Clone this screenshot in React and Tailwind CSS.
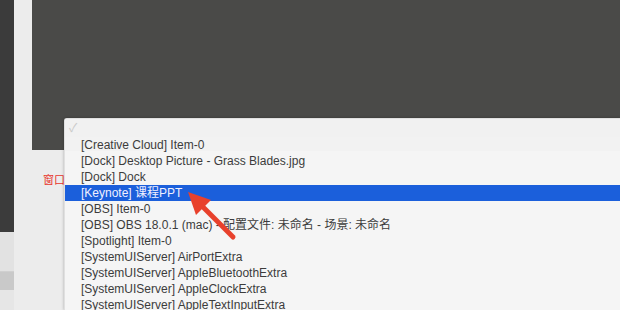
const items = [
  '[Creative Cloud] Item-0',
  '[Dock] Desktop Picture - Grass Blades.jpg',
  '[Dock] Dock',
  '[Keynote] 课程PPT',
  '[OBS] Item-0',
  '[OBS] OBS 18.0.1 (mac) - 配置文件: 未命名 - 场景: 未命名',
  '[Spotlight] Item-0',
  '[SystemUIServer] AirPortExtra',
  '[SystemUIServer] AppleBluetoothExtra',
  '[SystemUIServer] AppleClockExtra',
  '[SystemUIServer] AppleTextInputExtra',
];

function Arrow() {
  return (
    <svg className="absolute left-0 top-0" width="620" height="310" viewBox="0 0 620 310">
      <line x1="233" y1="237" x2="200" y2="204" stroke="#e8412c" strokeWidth="5" strokeLinecap="round" />
      <polygon points="188,192 196,215 211,200" fill="#e8412c" />
    </svg>
  );
}

export default function App() {
  return (
    <div
      className="relative w-[620px] h-[310px] overflow-hidden bg-[#ececec] flex"
      style={{ fontFamily: '"Liberation Sans", "Noto Sans CJK SC", sans-serif' }}
    >
      {/* left window edge */}
      <div className="w-[14px] flex flex-col">
        <div className="h-[232px] bg-[#3b3b3b]" />
        <div className="h-[40px] bg-[#e2e2e2] border-b border-[#d0d0d0]" />
        <div className="h-[18px] bg-[#c9c9c9]" />
        <div className="flex-1 bg-[#e6e6e6]" />
      </div>
      <div className="w-[18px] bg-[#ececec]" />
      <div className="flex-1 flex flex-col">
        <div className="h-[150px] bg-[#4a4a48]" />
        <div className="flex-1 bg-[#ececec] pl-[11px] pt-[17px]">
          <span className="text-[11px] text-[#e8352b]" style={{ fontFamily: '"Noto Sans CJK SC", sans-serif' }}>窗口</span>
        </div>
      </div>

      {/* popup menu */}
      <div className="absolute left-[64px] top-[118px] right-0 bottom-0 bg-[#f5f5f5] border-t border-l border-[#e0e0e0] rounded-tl-[3px] shadow-[0_0_3px_rgba(0,0,0,0.3)]">
        <div className="h-[18px] bg-[#f1f1f1] pl-[4px] text-[12px] leading-[18px] text-[#cacaca]">✓</div>
        <div className="bg-[#f2f2f2] h-[14px]" />
        <div className="-mt-[14px]">
          {items.map((t, i) => (
            <div
              key={i}
              className={
                'h-[16px] pl-[16px] text-[12px] leading-[16px] whitespace-nowrap ' +
                (i === 3 ? 'bg-[#1b5fdb] text-[#f0f0ff]' : 'text-[#3c3c3c]')
              }
            >
              {t}
            </div>
          ))}
        </div>
      </div>

      <Arrow />
    </div>
  );
}
